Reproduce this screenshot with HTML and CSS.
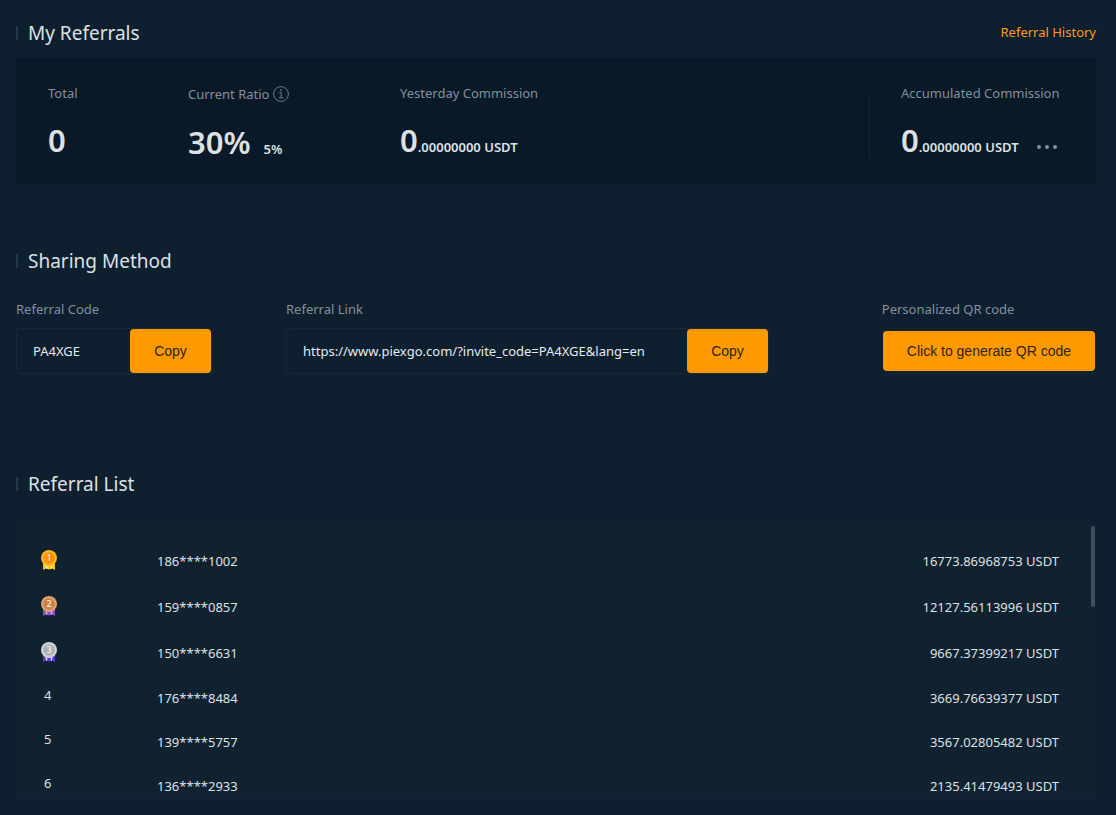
FILE: index.html
```html
<!DOCTYPE html>
<html lang="en">
<head>
<meta charset="utf-8">
<meta name="viewport" content="width=device-width, initial-scale=1">
<title>My Referrals</title>
<link rel="stylesheet" href="styles.css">
</head>
<body>
<main class="page">
  <section class="section">
    <header class="section-head">
      <h2 class="title">My Referrals</h2>
      <a class="history" href="#history">Referral History</a>
    </header>
    <div class="summary">
      <div class="stat">
        <span class="label">Total</span>
        <strong class="value">0</strong>
      </div>
      <div class="stat stat-ratio">
        <span class="label label-info">Current Ratio
          <svg class="info" viewBox="0 0 16 16" width="16" height="16" fill="none" stroke="currentColor" aria-hidden="true"><circle cx="8" cy="8" r="7.4" stroke-width="1"/><path d="M6.2 6.6h2v5M5.8 11.8h4.6" stroke-width="1"/><circle cx="8" cy="4.2" r=".9" fill="currentColor" stroke="none"/></svg>
        </span>
        <strong class="value">30%<small class="sub">5%</small></strong>
      </div>
      <div class="stat">
        <span class="label">Yesterday Commission</span>
        <strong class="value">0<small>.00000000 USDT</small></strong>
      </div>
      <div class="stat stat-total">
        <span class="label">Accumulated Commission</span>
        <div class="total-row">
          <strong class="value">0<small>.00000000 USDT</small></strong>
          <button class="more" type="button" aria-label="More">
            <svg viewBox="0 0 20 4" width="20" height="4" fill="currentColor" aria-hidden="true"><circle cx="2" cy="2" r="2"/><circle cx="10" cy="2" r="2"/><circle cx="18" cy="2" r="2"/></svg>
          </button>
        </div>
      </div>
    </div>
  </section>

  <section class="section">
    <header class="section-head">
      <h2 class="title">Sharing Method</h2>
    </header>
    <div class="sharing">
      <div class="share">
        <label class="label" for="code">Referral Code</label>
        <div class="field">
          <input class="field-input" id="code" type="text" value="PA4XGE" readonly>
          <button class="btn btn-copy" type="button">Copy</button>
        </div>
      </div>
      <div class="share">
        <label class="label" for="link">Referral Link</label>
        <div class="field">
          <input class="field-input" id="link" type="text" value="https://www.piexgo.com/?invite_code=PA4XGE&amp;lang=en" readonly>
          <button class="btn btn-copy" type="button">Copy</button>
        </div>
      </div>
      <div class="share share-qr">
        <span class="label">Personalized QR code</span>
        <button class="btn btn-qr" type="button">Click to generate QR code</button>
      </div>
    </div>
  </section>

  <section class="section">
    <header class="section-head">
      <h2 class="title">Referral List</h2>
    </header>
    <div class="list-wrap">
      <div class="list">
        <table class="table">
          <tbody>
            <tr class="row top">
              <td class="rank"><svg class="medal" viewBox="0 0 16 20" width="16" height="20" role="img" aria-label="Rank 1"><path d="M2 11h12v9l-2.8-1.6L8 19.6l-3.2-1.2L2 20z" fill="#fdc820"/><path d="M4.8 14h1.4v4.8l-1.4-.4zM9.8 14h1.4v4.4l-1.4.4z" fill="#fff0a0"/><circle cx="8" cy="8" r="8" fill="#fdb32b"/><circle cx="8" cy="8" r="5.8" fill="#fb9300"/><text class="medal-no" x="8" y="11">1</text></svg></td>
              <td class="user">186****1002</td><td class="amount">16773.86968753 USDT</td>
            </tr>
            <tr class="row top">
              <td class="rank"><svg class="medal" viewBox="0 0 16 20" width="16" height="20" role="img" aria-label="Rank 2"><path d="M2 11h12v9l-2.8-1.6L8 19.6l-3.2-1.2L2 20z" fill="#9048c8"/><path d="M4.8 14h1.4v4.8l-1.4-.4zM9.8 14h1.4v4.4l-1.4.4z" fill="#f0b0c8"/><circle cx="8" cy="8" r="8" fill="#dfa170"/><circle cx="8" cy="8" r="5.8" fill="#cb8243"/><text class="medal-no" x="8" y="11">2</text></svg></td>
              <td class="user">159****0857</td><td class="amount">12127.56113996 USDT</td>
            </tr>
            <tr class="row top">
              <td class="rank"><svg class="medal" viewBox="0 0 16 20" width="16" height="20" role="img" aria-label="Rank 3"><path d="M2 11h12v9l-2.8-1.6L8 19.6l-3.2-1.2L2 20z" fill="#5a35d8"/><path d="M4.8 14h1.4v4.8l-1.4-.4zM9.8 14h1.4v4.4l-1.4.4z" fill="#e4e0ff"/><circle cx="8" cy="8" r="8" fill="#cfd2d6"/><circle cx="8" cy="8" r="5.8" fill="#adb0b4"/><text class="medal-no" x="8" y="11">3</text></svg></td>
              <td class="user">150****6631</td><td class="amount">9667.37399217 USDT</td>
            </tr>
            <tr class="row"><td class="rank">4</td><td class="user">176****8484</td><td class="amount">3669.76639377 USDT</td></tr>
            <tr class="row"><td class="rank">5</td><td class="user">139****5757</td><td class="amount">3567.02805482 USDT</td></tr>
            <tr class="row"><td class="rank">6</td><td class="user">136****2933</td><td class="amount">2135.41479493 USDT</td></tr>
          </tbody>
        </table>
      </div>
      <span class="thumb"></span>
    </div>
  </section>
</main>
</body>
</html>
```
FILE: styles.css
```css
* { box-sizing: border-box; }

body {
  margin: 0;
  background: #0e1f2f;
  color: #dde1e4;
  font-family: "Noto Sans", "Open Sans", sans-serif;
  font-size: 13px;
  line-height: 20px;
}

.page {
  display: flex;
  flex-direction: column;
  padding: 19px 20px 16px 16px;
}

.section-head {
  display: flex;
  align-items: center;
  justify-content: space-between;
  height: 28px;
}

.title {
  display: flex;
  align-items: center;
  gap: 10px;
  margin: 0;
  font-size: 19px;
  font-weight: 400;
  line-height: 28px;
}

.title::before {
  content: "";
  width: 2px;
  height: 14px;
  background: #25364a;
}

.history {
  padding-bottom: 2px;
  color: #fb9a1c;
  text-decoration: none;
}

.label {
  display: block;
  color: #84909b;
}

.summary {
  display: grid;
  grid-template-columns: 140px 212px 1fr 193px;
  margin-top: 10px;
  padding: 26px 34px 24px 32px;
  height: 127px;
  background: #091927;
}

.stat {
  display: flex;
  flex-direction: column;
  gap: 17px;
}

.stat-ratio { padding-top: 1px; }

.stat-ratio .value { padding-top: 1px; }

.label-info {
  display: flex;
  align-items: center;
  gap: 4px;
}

.info { color: #6f7c88; }

.value {
  font-size: 31px;
  font-weight: 600;
  line-height: 40px;
  white-space: nowrap;
}

.value small { font-size: 13px; }

.value .sub { margin-left: 13px; }

.stat-total {
  padding-left: 32px;
  background: linear-gradient(#142431, #142431) left 12px / 1px 64px no-repeat;
}

.total-row {
  display: flex;
  align-items: center;
  gap: 18px;
}

.more {
  display: flex;
  margin-top: 6px;
  padding: 0;
  border: 0;
  background: none;
  color: #84909b;
  cursor: pointer;
}

.sharing {
  display: grid;
  grid-template-columns: 196px minmax(0, 483px) 1fr;
  column-gap: 74px;
}

.section + .section { margin-top: 63px; }

.section:last-child { margin-top: 96px; }

.share {
  display: flex;
  flex-direction: column;
  gap: 9px;
  padding-top: 24px;
}

.share-qr { justify-self: end; }

.field {
  display: flex;
  height: 46px;
  border: 1px solid #192938;
  border-radius: 4px;
}

.field-input {
  flex: 1;
  min-width: 0;
  padding: 0 16px;
  border: 0;
  outline: 0;
  background: transparent;
  color: #e6eaed;
  font: inherit;
}

.btn {
  border: 0;
  border-radius: 4px;
  background: #ff9900;
  color: #2c2418;
  font-family: "Liberation Sans", Arial, sans-serif;
  font-size: 14px;
  cursor: pointer;
}

.btn-copy { width: 81px; }

.btn-qr {
  height: 40px;
  margin: 3px 1px;
  padding: 0 24px;
  white-space: nowrap;
}

.list-wrap {
  position: relative;
  margin-top: 26px;
}

.list {
  max-height: 275px;
  padding: 14px 37px 0 24px;
  overflow-y: auto;
  scrollbar-width: none;
  border-bottom: 1px solid #142636;
  background: #10212f;
}

.thumb {
  position: absolute;
  top: 2px;
  right: 1px;
  width: 4px;
  height: 81px;
  border-radius: 2px;
  background: #3f4e5c;
}

.table {
  width: 100%;
  border-collapse: collapse;
}

.row { height: 44px; }

.top { height: 46px; }

.row td { padding: 0; }

.row .rank {
  width: 117px;
  padding: 0 0 6px 4px;
}

.top .rank { padding: 0 0 2px 1px; }

.row .amount { text-align: right; }

.medal { display: block; }

.medal-no {
  fill: #fff;
  font-size: 9px;
  text-anchor: middle;
}
```
